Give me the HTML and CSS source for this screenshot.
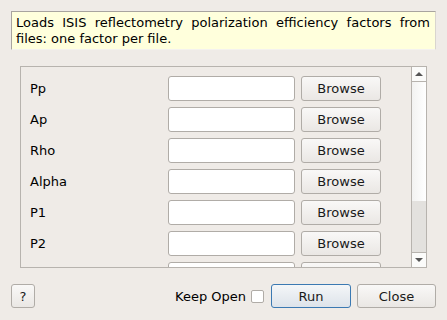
FILE: index.html
```html
<!DOCTYPE html>
<html lang="en">
<head>
  <meta charset="UTF-8">
  <title>LoadISISPolarizationEfficiencies</title>
  <link rel="stylesheet" href="styles.css">
</head>
<body>
  <div class="dialog">
    <div class="description">Loads ISIS reflectometry polarization efficiency factors from files: one factor per file.</div>

    <div class="props">
      <div class="props-content">
        <div class="row"><span class="label">Pp</span><input type="text"><button>Browse</button></div>
        <div class="row"><span class="label">Ap</span><input type="text"><button>Browse</button></div>
        <div class="row"><span class="label">Rho</span><input type="text"><button>Browse</button></div>
        <div class="row"><span class="label">Alpha</span><input type="text"><button>Browse</button></div>
        <div class="row"><span class="label">P1</span><input type="text"><button>Browse</button></div>
        <div class="row"><span class="label">P2</span><input type="text"><button>Browse</button></div>
        <!-- next row is scrolled out of view, only its top edge shows -->
        <div class="row"><span class="label"></span><input type="text"><button></button></div>
      </div>
      <div class="scrollbar">
        <div class="arrow up"></div>
        <div class="thumb"></div>
        <div class="track"></div>
        <div class="arrow down"></div>
      </div>
    </div>

    <div class="footer">
      <button class="help">?</button>
      <div class="spacer"></div>
      <label class="keep-open">Keep Open <span class="checkbox"></span></label>
      <button class="run">Run</button>
      <button>Close</button>
    </div>
  </div>
</body>
</html>
```

FILE: styles.css
```css
* {
  margin: 0;
  padding: 0;
  box-sizing: border-box;
}

body {
  background: #efebe7;
  font-family: 'DejaVu Sans', sans-serif;
  font-size: 13px;
  color: #000;
}

.dialog {
  width: 447px;
  height: 320px;
  padding: 11px 11px 0 11px;
  display: flex;
  flex-direction: column;
}

/* Description box */
.description {
  height: 39px;
  background: #ffffdc;
  border-top: 1px solid #a8a49f;
  border-left: 1px solid #a8a49f;
  border-right: 1px solid #d9d5cf;
  border-bottom: 1px solid #f4f2ef;
  padding: 3px 5px 0 4px;
  line-height: 16px;
  text-align: justify;
}

/* Property list */
.props {
  margin: 16px 9px 0 9px;
  height: 202px;
  border: 1px solid #b7b3ae;
  display: flex;
  overflow: hidden;
}

.props-content {
  flex: 1;
  padding: 9px 0 0 9px;
  display: flex;
  flex-direction: column;
  gap: 6px;
}

.row {
  display: flex;
  align-items: center;
  height: 25px;
  flex-shrink: 0;
}

.label {
  width: 138px;
}

input {
  width: 127px;
  height: 25px;
  border: 1px solid #b0aca7;
  border-radius: 3px;
  background: #fff;
  margin-right: 6px;
}

button {
  width: 80px;
  height: 25px;
  font-family: 'DejaVu Sans', sans-serif;
  font-size: 13px;
  color: #1a1a1a;
  border: 1px solid #b0aca7;
  border-radius: 3px;
  background: linear-gradient(#f9f8f7, #eae7e4);
}

/* Scrollbar */
.scrollbar {
  width: 15px;
  border-left: 1px solid #b7b3ae;
  display: flex;
  flex-direction: column;
}

.arrow {
  height: 15px;
  background: #fbfbfa;
  display: flex;
  align-items: center;
  justify-content: center;
}

.arrow.up {
  border-bottom: 1px solid #b7b3ae;
}

.arrow.down {
  border-top: 1px solid #b7b3ae;
}

.arrow.up::after {
  content: '';
  border-left: 4px solid transparent;
  border-right: 4px solid transparent;
  border-bottom: 4px solid #555;
}

.arrow.down::after {
  content: '';
  border-left: 4px solid transparent;
  border-right: 4px solid transparent;
  border-top: 4px solid #555;
}

.thumb {
  height: 119px;
  background: linear-gradient(to right, #f2f2f1, #ffffff);
}

.track {
  flex: 1;
  background: #e3e1de;
}

/* Footer */
.footer {
  display: flex;
  align-items: center;
  margin-top: 16px;
  height: 24px;
}

.footer button {
  height: 24px;
  width: 79px;
}

.footer .help {
  width: 24px;
}

.spacer {
  flex: 1;
}

.keep-open {
  display: flex;
  align-items: center;
  gap: 5px;
  margin-right: 7px;
}

.checkbox {
  width: 13px;
  height: 13px;
  background: #fff;
  border: 1px solid #b0aca7;
  border-radius: 2px;
}

.footer .run {
  width: 80px;
  border-color: #3b79b2;
  background: linear-gradient(#f4f6f8, #dde3ea);
  margin-right: 6px;
}
```
